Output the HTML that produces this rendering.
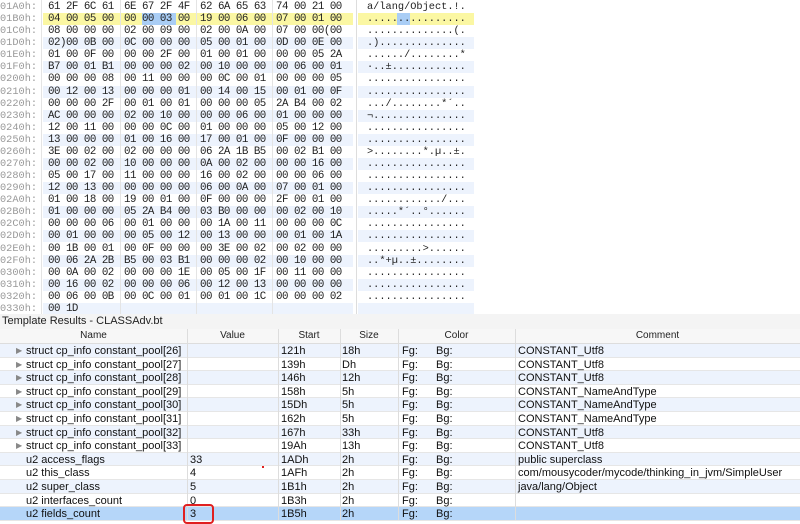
<!DOCTYPE html><html><head><meta charset="utf-8"><style>
*{margin:0;padding:0;box-sizing:border-box}
body{width:800px;height:520px;overflow:hidden;background:#fff;position:relative;font-family:"Liberation Sans",sans-serif}
.hex{position:absolute;left:0;top:1px;width:800px}
.r{position:relative;height:12.08px;font-family:"Liberation Mono",monospace;font-size:10.8px;letter-spacing:-0.5px;line-height:12px;white-space:pre}
.r .o{position:absolute;left:0;color:#999;font-size:10.3px;letter-spacing:0}
.r .hb{position:absolute;left:43px;width:310px;top:0;height:12px}
.r .ab{position:absolute;left:358px;width:116px;top:0;height:12px}
.r.b .hb,.r.b .ab{background:#edf3fd}
.r.y .hb,.r.y .ab{background:#fbf7a3}
.g{position:absolute;color:#222}
.g0{left:48px}.g1{left:124px}.g2{left:200px}.g3{left:276px}
.a{position:absolute;left:367px;color:#222;font-size:10.3px;letter-spacing:0}
.vl{position:absolute;top:0;height:314px;width:1px;background:#e4e4e4}
.tt{position:absolute;left:0;top:314px;width:800px;height:15px;font-size:11px;line-height:15px;padding-left:2px;background:#f4f4f4;color:#222}
.th{position:absolute;left:0;top:329px;width:800px;height:15px;background:#f7f7f7;border-bottom:1px solid #ddd;font-size:10px;line-height:14px;color:#222}
.th span{position:absolute;text-align:center;top:0}
.tr{position:absolute;left:0;width:800px;height:13.6px;font-size:11px;line-height:14px;color:#111;border-bottom:1px solid #e6e6e6}
.tr.b{background:#edf3fd}.tr.s{background:#b5d6f9}
.tr span{position:absolute;top:0;white-space:nowrap}
.tr .tri{left:16px;color:#888;font-size:8px}
.cl{position:absolute;top:329px;height:191px;width:1px;background:#ddd}
</style></head><body>
<div class="hex">
<div class="r"><span class="hb"></span><span class="ab"></span><span class="o">01A0h:</span><span class="g g0">61 2F 6C 61</span><span class="g g1">6E 67 2F 4F</span><span class="g g2">62 6A 65 63</span><span class="g g3">74 00 21 00</span><span class="a">a/lang/Object.!.</span></div>
<div class="r y"><span class="hb"></span><span class="ab"></span><span style="position:absolute;left:142px;top:0;width:34px;height:12px;background:#a9cdf5"></span><span style="position:absolute;left:397px;top:0;width:13px;height:12px;background:#a9cdf5"></span><span class="o">01B0h:</span><span class="g g0">04 00 05 00</span><span class="g g1">00 00 03 00</span><span class="g g2">19 00 06 00</span><span class="g g3">07 00 01 00</span><span class="a">................</span></div>
<div class="r"><span class="hb"></span><span class="ab"></span><span class="o">01C0h:</span><span class="g g0">08 00 00 00</span><span class="g g1">02 00 09 00</span><span class="g g2">02 00 0A 00</span><span class="g g3">07 00 00(00</span><span class="a">..............(.</span></div>
<div class="r b"><span class="hb"></span><span class="ab"></span><span class="o">01D0h:</span><span class="g g0">02)00 0B 00</span><span class="g g1">0C 00 00 00</span><span class="g g2">05 00 01 00</span><span class="g g3">0D 00 0E 00</span><span class="a">.)..............</span></div>
<div class="r"><span class="hb"></span><span class="ab"></span><span class="o">01E0h:</span><span class="g g0">01 00 0F 00</span><span class="g g1">00 00 2F 00</span><span class="g g2">01 00 01 00</span><span class="g g3">00 00 05 2A</span><span class="a">....../........*</span></div>
<div class="r b"><span class="hb"></span><span class="ab"></span><span class="o">01F0h:</span><span class="g g0">B7 00 01 B1</span><span class="g g1">00 00 00 02</span><span class="g g2">00 10 00 00</span><span class="g g3">00 06 00 01</span><span class="a">·..±............</span></div>
<div class="r"><span class="hb"></span><span class="ab"></span><span class="o">0200h:</span><span class="g g0">00 00 00 08</span><span class="g g1">00 11 00 00</span><span class="g g2">00 0C 00 01</span><span class="g g3">00 00 00 05</span><span class="a">................</span></div>
<div class="r b"><span class="hb"></span><span class="ab"></span><span class="o">0210h:</span><span class="g g0">00 12 00 13</span><span class="g g1">00 00 00 01</span><span class="g g2">00 14 00 15</span><span class="g g3">00 01 00 0F</span><span class="a">................</span></div>
<div class="r"><span class="hb"></span><span class="ab"></span><span class="o">0220h:</span><span class="g g0">00 00 00 2F</span><span class="g g1">00 01 00 01</span><span class="g g2">00 00 00 05</span><span class="g g3">2A B4 00 02</span><span class="a">.../........*´..</span></div>
<div class="r b"><span class="hb"></span><span class="ab"></span><span class="o">0230h:</span><span class="g g0">AC 00 00 00</span><span class="g g1">02 00 10 00</span><span class="g g2">00 00 06 00</span><span class="g g3">01 00 00 00</span><span class="a">¬...............</span></div>
<div class="r"><span class="hb"></span><span class="ab"></span><span class="o">0240h:</span><span class="g g0">12 00 11 00</span><span class="g g1">00 00 0C 00</span><span class="g g2">01 00 00 00</span><span class="g g3">05 00 12 00</span><span class="a">................</span></div>
<div class="r b"><span class="hb"></span><span class="ab"></span><span class="o">0250h:</span><span class="g g0">13 00 00 00</span><span class="g g1">01 00 16 00</span><span class="g g2">17 00 01 00</span><span class="g g3">0F 00 00 00</span><span class="a">................</span></div>
<div class="r"><span class="hb"></span><span class="ab"></span><span class="o">0260h:</span><span class="g g0">3E 00 02 00</span><span class="g g1">02 00 00 00</span><span class="g g2">06 2A 1B B5</span><span class="g g3">00 02 B1 00</span><span class="a">&gt;........*.µ..±.</span></div>
<div class="r b"><span class="hb"></span><span class="ab"></span><span class="o">0270h:</span><span class="g g0">00 00 02 00</span><span class="g g1">10 00 00 00</span><span class="g g2">0A 00 02 00</span><span class="g g3">00 00 16 00</span><span class="a">................</span></div>
<div class="r"><span class="hb"></span><span class="ab"></span><span class="o">0280h:</span><span class="g g0">05 00 17 00</span><span class="g g1">11 00 00 00</span><span class="g g2">16 00 02 00</span><span class="g g3">00 00 06 00</span><span class="a">................</span></div>
<div class="r b"><span class="hb"></span><span class="ab"></span><span class="o">0290h:</span><span class="g g0">12 00 13 00</span><span class="g g1">00 00 00 00</span><span class="g g2">06 00 0A 00</span><span class="g g3">07 00 01 00</span><span class="a">................</span></div>
<div class="r"><span class="hb"></span><span class="ab"></span><span class="o">02A0h:</span><span class="g g0">01 00 18 00</span><span class="g g1">19 00 01 00</span><span class="g g2">0F 00 00 00</span><span class="g g3">2F 00 01 00</span><span class="a">............/...</span></div>
<div class="r b"><span class="hb"></span><span class="ab"></span><span class="o">02B0h:</span><span class="g g0">01 00 00 00</span><span class="g g1">05 2A B4 00</span><span class="g g2">03 B0 00 00</span><span class="g g3">00 02 00 10</span><span class="a">.....*´..°......</span></div>
<div class="r"><span class="hb"></span><span class="ab"></span><span class="o">02C0h:</span><span class="g g0">00 00 00 06</span><span class="g g1">00 01 00 00</span><span class="g g2">00 1A 00 11</span><span class="g g3">00 00 00 0C</span><span class="a">................</span></div>
<div class="r b"><span class="hb"></span><span class="ab"></span><span class="o">02D0h:</span><span class="g g0">00 01 00 00</span><span class="g g1">00 05 00 12</span><span class="g g2">00 13 00 00</span><span class="g g3">00 01 00 1A</span><span class="a">................</span></div>
<div class="r"><span class="hb"></span><span class="ab"></span><span class="o">02E0h:</span><span class="g g0">00 1B 00 01</span><span class="g g1">00 0F 00 00</span><span class="g g2">00 3E 00 02</span><span class="g g3">00 02 00 00</span><span class="a">.........&gt;......</span></div>
<div class="r b"><span class="hb"></span><span class="ab"></span><span class="o">02F0h:</span><span class="g g0">00 06 2A 2B</span><span class="g g1">B5 00 03 B1</span><span class="g g2">00 00 00 02</span><span class="g g3">00 10 00 00</span><span class="a">..*+µ..±........</span></div>
<div class="r"><span class="hb"></span><span class="ab"></span><span class="o">0300h:</span><span class="g g0">00 0A 00 02</span><span class="g g1">00 00 00 1E</span><span class="g g2">00 05 00 1F</span><span class="g g3">00 11 00 00</span><span class="a">................</span></div>
<div class="r b"><span class="hb"></span><span class="ab"></span><span class="o">0310h:</span><span class="g g0">00 16 00 02</span><span class="g g1">00 00 00 06</span><span class="g g2">00 12 00 13</span><span class="g g3">00 00 00 00</span><span class="a">................</span></div>
<div class="r"><span class="hb"></span><span class="ab"></span><span class="o">0320h:</span><span class="g g0">00 06 00 0B</span><span class="g g1">00 0C 00 01</span><span class="g g2">00 01 00 1C</span><span class="g g3">00 00 00 02</span><span class="a">................</span></div>
<div class="r b"><span class="hb"></span><span class="ab"></span><span class="o">0330h:</span><span class="g g0">00 1D</span></div>
</div>
<div class="vl" style="left:41px"></div><div class="vl" style="left:120px"></div><div class="vl" style="left:196px"></div><div class="vl" style="left:272px"></div><div class="vl" style="left:356px;background:#ddd"></div>
<div class="tt">Template Results - CLASSAdv.bt</div>
<div class="th"><span style="left:0;width:187px">Name</span><span style="left:187px;width:91px">Value</span><span style="left:278px;width:62px">Start</span><span style="left:340px;width:58px">Size</span><span style="left:398px;width:117px">Color</span><span style="left:515px;width:285px">Comment</span></div>
<div class="tr b" style="top:344px"><span class="tri">▶</span><span style="left:26px">struct cp_info constant_pool[26]</span><span style="left:281px">121h</span><span style="left:342px">18h</span><span style="left:402px">Fg:</span><span style="left:436px">Bg:</span><span style="left:518px">CONSTANT_Utf8</span></div>
<div class="tr" style="top:357.6px"><span class="tri">▶</span><span style="left:26px">struct cp_info constant_pool[27]</span><span style="left:281px">139h</span><span style="left:342px">Dh</span><span style="left:402px">Fg:</span><span style="left:436px">Bg:</span><span style="left:518px">CONSTANT_Utf8</span></div>
<div class="tr b" style="top:371.2px"><span class="tri">▶</span><span style="left:26px">struct cp_info constant_pool[28]</span><span style="left:281px">146h</span><span style="left:342px">12h</span><span style="left:402px">Fg:</span><span style="left:436px">Bg:</span><span style="left:518px">CONSTANT_Utf8</span></div>
<div class="tr" style="top:384.8px"><span class="tri">▶</span><span style="left:26px">struct cp_info constant_pool[29]</span><span style="left:281px">158h</span><span style="left:342px">5h</span><span style="left:402px">Fg:</span><span style="left:436px">Bg:</span><span style="left:518px">CONSTANT_NameAndType</span></div>
<div class="tr b" style="top:398.4px"><span class="tri">▶</span><span style="left:26px">struct cp_info constant_pool[30]</span><span style="left:281px">15Dh</span><span style="left:342px">5h</span><span style="left:402px">Fg:</span><span style="left:436px">Bg:</span><span style="left:518px">CONSTANT_NameAndType</span></div>
<div class="tr" style="top:412px"><span class="tri">▶</span><span style="left:26px">struct cp_info constant_pool[31]</span><span style="left:281px">162h</span><span style="left:342px">5h</span><span style="left:402px">Fg:</span><span style="left:436px">Bg:</span><span style="left:518px">CONSTANT_NameAndType</span></div>
<div class="tr b" style="top:425.6px"><span class="tri">▶</span><span style="left:26px">struct cp_info constant_pool[32]</span><span style="left:281px">167h</span><span style="left:342px">33h</span><span style="left:402px">Fg:</span><span style="left:436px">Bg:</span><span style="left:518px">CONSTANT_Utf8</span></div>
<div class="tr" style="top:439.2px"><span class="tri">▶</span><span style="left:26px">struct cp_info constant_pool[33]</span><span style="left:281px">19Ah</span><span style="left:342px">13h</span><span style="left:402px">Fg:</span><span style="left:436px">Bg:</span><span style="left:518px">CONSTANT_Utf8</span></div>
<div class="tr b" style="top:452.8px"><span style="left:26px">u2 access_flags</span><span style="left:190px">33</span><span style="left:281px">1ADh</span><span style="left:342px">2h</span><span style="left:402px">Fg:</span><span style="left:436px">Bg:</span><span style="left:518px">public superclass</span></div>
<div class="tr" style="top:466.4px"><span style="left:26px">u2 this_class</span><span style="left:190px">4</span><span style="left:281px">1AFh</span><span style="left:342px">2h</span><span style="left:402px">Fg:</span><span style="left:436px">Bg:</span><span style="left:518px">com/mousycoder/mycode/thinking_in_jvm/SimpleUser</span></div>
<div class="tr b" style="top:480px"><span style="left:26px">u2 super_class</span><span style="left:190px">5</span><span style="left:281px">1B1h</span><span style="left:342px">2h</span><span style="left:402px">Fg:</span><span style="left:436px">Bg:</span><span style="left:518px">java/lang/Object</span></div>
<div class="tr" style="top:493.6px"><span style="left:26px">u2 interfaces_count</span><span style="left:190px">0</span><span style="left:281px">1B3h</span><span style="left:342px">2h</span><span style="left:402px">Fg:</span><span style="left:436px">Bg:</span></div>
<div class="tr s" style="top:507.2px"><span style="left:26px">u2 fields_count</span><span style="left:190px">3</span><span style="left:281px">1B5h</span><span style="left:342px">2h</span><span style="left:402px">Fg:</span><span style="left:436px">Bg:</span></div>
<div class="cl" style="left:187px"></div><div class="cl" style="left:278px"></div><div class="cl" style="left:340px"></div><div class="cl" style="left:398px"></div><div class="cl" style="left:515px"></div>
<div style="position:absolute;left:183px;top:504px;width:31px;height:20px;border:2px solid #e02020;border-radius:4px"></div>
<div style="position:absolute;left:262px;top:466px;width:2px;height:2px;background:#e02020"></div>
</body></html>
